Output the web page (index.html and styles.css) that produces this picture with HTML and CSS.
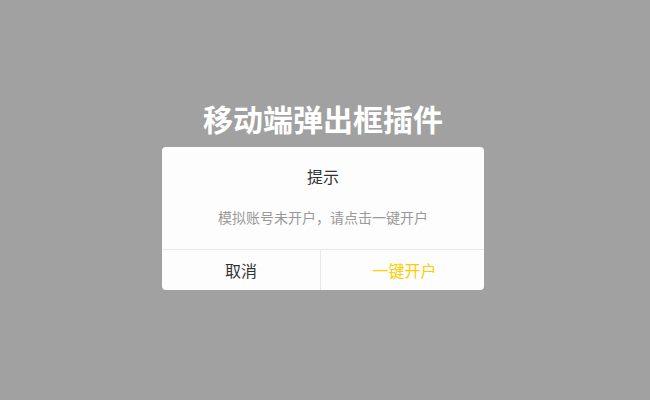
FILE: index.html
```html
<!DOCTYPE html>
<html lang="zh-CN">
<head>
<meta charset="utf-8">
<title>移动端弹出框插件</title>
<link rel="stylesheet" href="styles.css">
</head>
<body>
<div class="page">
  <h1 class="heading">移动端弹出框插件</h1>
  <div class="dialog">
    <div class="dialog-body">
      <div class="dialog-title">提示</div>
      <div class="dialog-msg">模拟账号未开户，请点击一键开户</div>
    </div>
    <div class="dialog-actions">
      <div class="btn btn-cancel">取消</div>
      <div class="btn btn-ok">一键开户</div>
    </div>
  </div>
</div>
</body>
</html>
```
FILE: styles.css
```css
html, body {
  margin: 0;
  padding: 0;
}
body {
  background: #a1a1a1;
  width: 650px;
  height: 400px;
  overflow: hidden;
  font-family: "Noto Sans CJK SC", "Microsoft YaHei", sans-serif;
}
.page {
  display: flex;
  flex-direction: column;
  align-items: center;
  padding-top: 100px;
}
.heading {
  margin: 0 4px 11px 0;
  font-size: 30px;
  line-height: 36px;
  font-weight: 700;
  color: #fff;
}
.dialog {
  width: 322px;
  background: #fdfdfd;
  border-radius: 4px;
  overflow: hidden;
  margin-right: 4px;
}
.dialog-body {
  padding: 17px 16px 22px;
  display: flex;
  flex-direction: column;
  align-items: center;
  gap: 19px;
  border-bottom: 1px solid #e8e8e8;
}
.dialog-title {
  font-size: 16px;
  line-height: 24px;
  color: #333;
}
.dialog-msg {
  font-size: 14px;
  line-height: 20px;
  color: #999;
}
.dialog-actions {
  display: flex;
  height: 40px;
}
.btn {
  flex: 1;
  display: flex;
  align-items: center;
  justify-content: center;
  font-size: 16px;
}
.btn-cancel {
  color: #333;
  border-right: 1px solid #e8e8e8;
  flex: 0 0 158px;
}
.btn-ok {
  color: #ffcc00;
  padding-left: 4px;
}
```
